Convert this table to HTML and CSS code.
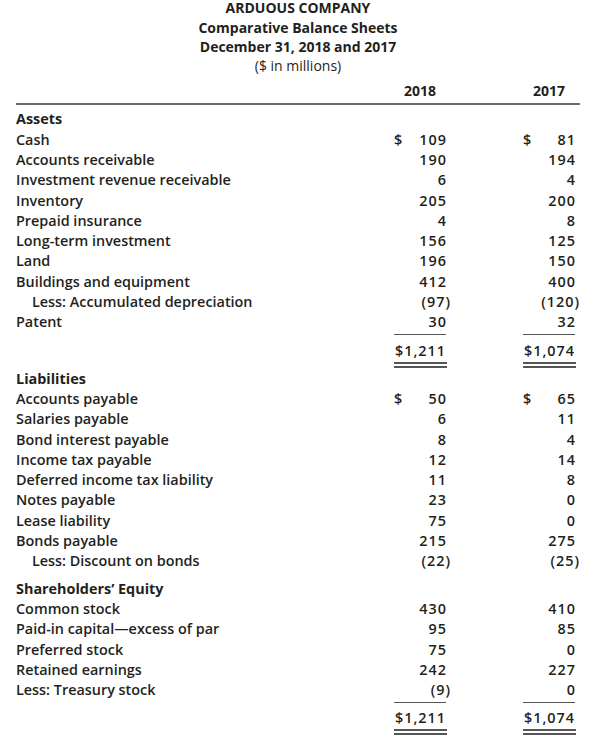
FILE: index.html
```html
<!DOCTYPE html>
<html>
<head>
<meta charset="utf-8">
<link rel="stylesheet" href="styles.css">
</head>
<body>
<div class="sheet">
  <header class="title">
    <div class="t1">ARDUOUS COMPANY</div>
    <div class="t2">Comparative Balance Sheets</div>
    <div class="t2">December 31, 2018 and 2017</div>
    <div class="t3">($ in millions)</div>
  </header>
  <div class="row head">
    <div></div>
    <div class="yr">2018</div>
    <div class="yr">2017</div>
  </div>
  <div class="rule"></div>

  <div class="row sec"><div>Assets</div><div></div><div></div></div>
  <div class="row"><div>Cash</div><div class="num"><span>$</span><span>109</span></div><div class="num"><span>$</span><span>81</span></div></div>
  <div class="row"><div>Accounts receivable</div><div class="num"><span>190</span></div><div class="num"><span>194</span></div></div>
  <div class="row"><div>Investment revenue receivable</div><div class="num"><span>6</span></div><div class="num"><span>4</span></div></div>
  <div class="row"><div>Inventory</div><div class="num"><span>205</span></div><div class="num"><span>200</span></div></div>
  <div class="row"><div>Prepaid insurance</div><div class="num"><span>4</span></div><div class="num"><span>8</span></div></div>
  <div class="row"><div>Long-term investment</div><div class="num"><span>156</span></div><div class="num"><span>125</span></div></div>
  <div class="row"><div>Land</div><div class="num"><span>196</span></div><div class="num"><span>150</span></div></div>
  <div class="row"><div>Buildings and equipment</div><div class="num"><span>412</span></div><div class="num"><span>400</span></div></div>
  <div class="row"><div class="ind">Less: Accumulated depreciation</div><div class="num"><span class="neg">(97)</span></div><div class="num"><span class="neg">(120)</span></div></div>
  <div class="row under"><div>Patent</div><div class="num"><span>30</span></div><div class="num"><span>32</span></div></div>
  <div class="trow"><div></div><div class="tcell">$1,211</div><div class="tcell">$1,074</div></div>

  <div class="row sec gap1"><div>Liabilities</div><div></div><div></div></div>
  <div class="row"><div>Accounts payable</div><div class="num"><span>$</span><span>50</span></div><div class="num"><span>$</span><span>65</span></div></div>
  <div class="row"><div>Salaries payable</div><div class="num"><span>6</span></div><div class="num"><span>11</span></div></div>
  <div class="row"><div>Bond interest payable</div><div class="num"><span>8</span></div><div class="num"><span>4</span></div></div>
  <div class="row"><div>Income tax payable</div><div class="num"><span>12</span></div><div class="num"><span>14</span></div></div>
  <div class="row"><div>Deferred income tax liability</div><div class="num"><span>11</span></div><div class="num"><span>8</span></div></div>
  <div class="row"><div>Notes payable</div><div class="num"><span>23</span></div><div class="num"><span>0</span></div></div>
  <div class="row"><div>Lease liability</div><div class="num"><span>75</span></div><div class="num"><span>0</span></div></div>
  <div class="row"><div>Bonds payable</div><div class="num"><span>215</span></div><div class="num"><span>275</span></div></div>
  <div class="row"><div class="ind">Less: Discount on bonds</div><div class="num"><span class="neg">(22)</span></div><div class="num"><span class="neg">(25)</span></div></div>

  <div class="row sec gap2"><div>Shareholders’ Equity</div><div></div><div></div></div>
  <div class="row"><div>Common stock</div><div class="num"><span>430</span></div><div class="num"><span>410</span></div></div>
  <div class="row"><div>Paid-in capital—excess of par</div><div class="num"><span>95</span></div><div class="num"><span>85</span></div></div>
  <div class="row"><div>Preferred stock</div><div class="num"><span>75</span></div><div class="num"><span>0</span></div></div>
  <div class="row"><div>Retained earnings</div><div class="num"><span>242</span></div><div class="num"><span>227</span></div></div>
  <div class="row under"><div>Less: Treasury stock</div><div class="num"><span class="neg">(9)</span></div><div class="num"><span>0</span></div></div>
  <div class="trow"><div></div><div class="tcell">$1,211</div><div class="tcell">$1,074</div></div>
</div>
</body>
</html>
```

FILE: styles.css
```css
html, body {
  margin: 0;
  padding: 0;
  background: #ffffff;
}

body {
  font-family: "Open Sans", "Liberation Sans", sans-serif;
  font-size: 14.4px;
  font-weight: 600;
  color: #231f20;
}

.sheet {
  width: 559px;
  padding: 0 0 0 16px;
}

.title {
  text-align: center;
  width: 564px;
  font-size: 14px;
  line-height: 19.3px;
  margin-left: -16px;
  padding-left: 16px;
}

.t1 {
  font-weight: 700;
  line-height: 15px;
  margin-bottom: 2.5px;
}

.t2 {
  font-weight: 700;
}

.t3 {
  font-weight: 400;
}

.row {
  display: grid;
  grid-template-columns: 1fr 52px 52px;
  column-gap: 77px;
  height: 20.3px;
  line-height: 20.3px;
  white-space: nowrap;
}

.head {
  margin-top: 6px;
  height: 20px;
  line-height: 20px;
  font-size: 14px;
}

.yr {
  text-align: center;
  font-weight: 700;
}

.rule {
  height: 2px;
  background: #6b6b6b;
  width: 564px;
  margin-top: 2px;
  margin-bottom: 4px;
}

.sec > div:first-child {
  font-weight: 700;
}

.ind {
  padding-left: 16px;
}

.num {
  display: flex;
  justify-content: space-between;
  letter-spacing: 1px;
}

.num span:last-child {
  margin-right: -1px;
}

.num span:only-child {
  margin-left: auto;
}

.num span.neg {
  margin-right: -5px;
}

.under .num {
  border-bottom: 1px solid #555;
  height: 22px;
}

.trow {
  display: grid;
  grid-template-columns: 1fr 52px 52px;
  column-gap: 77px;
  margin-top: 8px;
  white-space: nowrap;
}

.tcell {
  text-align: right;
  letter-spacing: 1px;
  margin-right: -1px;
  padding-right: 1px;
  line-height: 20px;
  padding-bottom: 1px;
  border-bottom: 6px double #555555;
}

.gap1 {
  margin-top: 1px;
}

.gap2 {
  margin-top: 7px;
}
```
